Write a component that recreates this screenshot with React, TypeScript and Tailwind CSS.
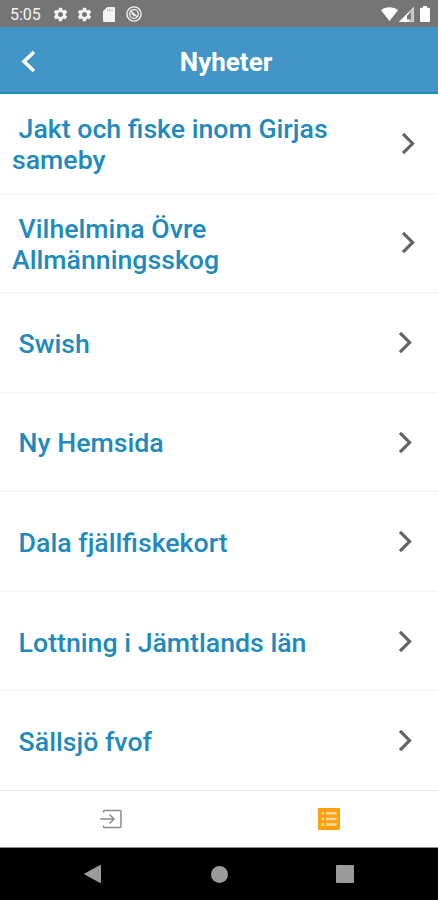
import { MdSettings } from 'react-icons/md';

type NewsItem = {
  title: string;
  wrapped?: boolean;
};

const news: NewsItem[] = [
  { title: 'Jakt och fiske inom Girjas sameby', wrapped: true },
  { title: 'Vilhelmina Övre Allmänningsskog', wrapped: true },
  { title: 'Swish' },
  { title: 'Ny Hemsida' },
  { title: 'Dala fjällfiskekort' },
  { title: 'Lottning i Jämtlands län' },
  { title: 'Sällsjö fvof' },
];

function StatusBar() {
  return (
    <div className="flex h-[27px] shrink-0 items-center bg-[#757575] pl-[10px] pr-[8px] pt-px text-[#f4f4f4]">
      <span className="w-[42px] pt-px text-[16px] leading-none">5:05</span>
      <MdSettings className="h-[17px] w-[17px]" />
      <MdSettings className="ml-[7px] h-[17px] w-[17px]" />
      <svg className="ml-[10px] h-[15px] w-[12px]" viewBox="0 0 12 15" fill="currentColor">
        <path d="M4.3 0H11q1 0 1 1v13q0 1-1 1H1q-1 0-1-1V4.3z" />
        <path d="M4.5 2v2.5M6.8 2v2.5M9.1 2v2.5" stroke="#a8a8a8" strokeWidth=".8" />
      </svg>
      <svg className="ml-[11px] h-4 w-4" viewBox="0 0 16 16" fill="none" stroke="currentColor">
        <circle cx="8" cy="8" r="7.1" strokeWidth="1.4" />
        <circle cx="8" cy="8" r="4.3" strokeWidth="1.3" />
        <path d="M4.8 5l6.4 6M5.5 8.3c1.5-.8 2.5.2 2.5 2" strokeWidth="1.3" />
      </svg>
      <svg className="ml-auto h-[14px] w-[17px]" viewBox="0 0 17 14" fill="#fff">
        <path d="M0 3.2C4.8-.6 12.2-.6 17 3.2L8.5 14z" />
      </svg>
      <svg className="ml-[1px] h-[15px] w-[15px]" viewBox="0 0 15 15">
        <path d="M15 0v15H0z" fill="#c4c4c4" />
        <path d="M10 5v10H0z" fill="#fff" />
        <path d="M11.8 5.2v7.2L8 12.5V8.8z" fill="#757575" />
        <path d="M0 15L15 0v15z" fill="none" stroke="#e4e4e4" strokeWidth=".8" />
      </svg>
      <svg className="ml-[6px] h-4 w-[10px]" viewBox="0 0 10 16" fill="#fff">
        <path d="M3 0h4v1.7h2q1 0 1 1V15q0 1-1 1H1q-1 0-1-1V2.7q0-1 1-1h2z" />
      </svg>
    </div>
  );
}

function Header() {
  return (
    <header className="grid h-[67px] shrink-0 grid-cols-[58px_1fr_58px] items-center border-b-2 border-[#1c8bc0] bg-[#4295c7]">
      <button className="ml-[21px] mt-[3px] w-[15px]" aria-label="Tillbaka">
        <svg className="h-[23px] w-[15px]" viewBox="0 0 15 23" fill="none" stroke="#fff" strokeWidth="3.6">
          <path d="M13 2L3 11.5 13 21" />
        </svg>
      </button>
      <h1 className="pl-[14px] pt-[6px] text-center text-[26px] leading-[31px] font-bold text-white">Nyheter</h1>
    </header>
  );
}

function NewsRow({ item }: { item: NewsItem }) {
  return (
    <li className="flex min-h-0 flex-1 items-center justify-between border-b border-[#f3f3ef] pl-3 last:border-[#e9e8dc]">
      <p className="w-[330px] indent-[6.6px] pt-[4px] text-[26.7px] leading-[31.2px] font-medium text-[#218abc]">
        {item.title}
      </p>
      <svg
        className={`h-[23px] w-[15px] shrink-0 ${item.wrapped ? 'mr-[22px]' : 'mr-[25px]'}`}
        viewBox="0 0 15 23"
        fill="none"
        stroke="#626262"
        strokeWidth="3.1"
      >
        <path d="M2 1.9l9.6 9.6L2 21.1" />
      </svg>
    </li>
  );
}

function TabBar() {
  return (
    <nav className="grid h-[57px] shrink-0 grid-cols-2 items-center border-b border-[#8c8c8c] bg-white">
      <button className="flex justify-center pl-[3px]" aria-label="Logga in">
        <svg className="h-5 w-[23px]" viewBox="0 0 23 20" fill="none" stroke="#8a8a8a" strokeWidth="1.5">
          <path d="M3.5 3.5v-1q0-1 1-1H20q1 0 1 1v15q0 1-1 1H4.5q-1 0-1-1v-1M0 10h14M9.5 5.5L14 10l-4.5 4.5" />
        </svg>
      </button>
      <button className="flex justify-center" aria-label="Nyheter">
        <svg className="h-[22px] w-[22px]" viewBox="0 0 22 22">
          <rect width="22" height="22" rx="1.2" fill="#ff9f0c" />
          <path
            d="M3.5 4H6v2.5H3.5zM8 4h10.5v2.5H8zM3.5 9.7H6v2.5H3.5zM8 9.7h10.5v2.5H8zM3.5 15.3H6v2.5H3.5zM8 15.3h10.5v2.5H8z"
            fill="#ffdca3"
          />
        </svg>
      </button>
    </nav>
  );
}

function SystemNav() {
  return (
    <div className="flex h-[52px] shrink-0 items-center justify-between bg-black px-[84px]">
      <svg className="h-[18px] w-[17px]" viewBox="0 0 17 18" fill="#9b9b9b">
        <path d="M15.6.2Q17-.3 17 1v16q0 1.3-1.4.8L.6 9.6Q-.4 9 .6 8.4z" />
      </svg>
      <div className="ml-px h-[17px] w-[17px] rounded-full bg-[#9b9b9b]" />
      <div className="h-[18px] w-[18px] rounded-[1px] bg-[#9b9b9b]" />
    </div>
  );
}

export default function App() {
  return (
    <div className="flex h-[900px] w-[438px] flex-col overflow-hidden bg-white font-['Roboto',sans-serif]">
      <StatusBar />
      <Header />
      <ul className="flex min-h-0 flex-1 flex-col">
        {news.map((item) => (
          <NewsRow key={item.title} item={item} />
        ))}
      </ul>
      <TabBar />
      <SystemNav />
    </div>
  );
}
